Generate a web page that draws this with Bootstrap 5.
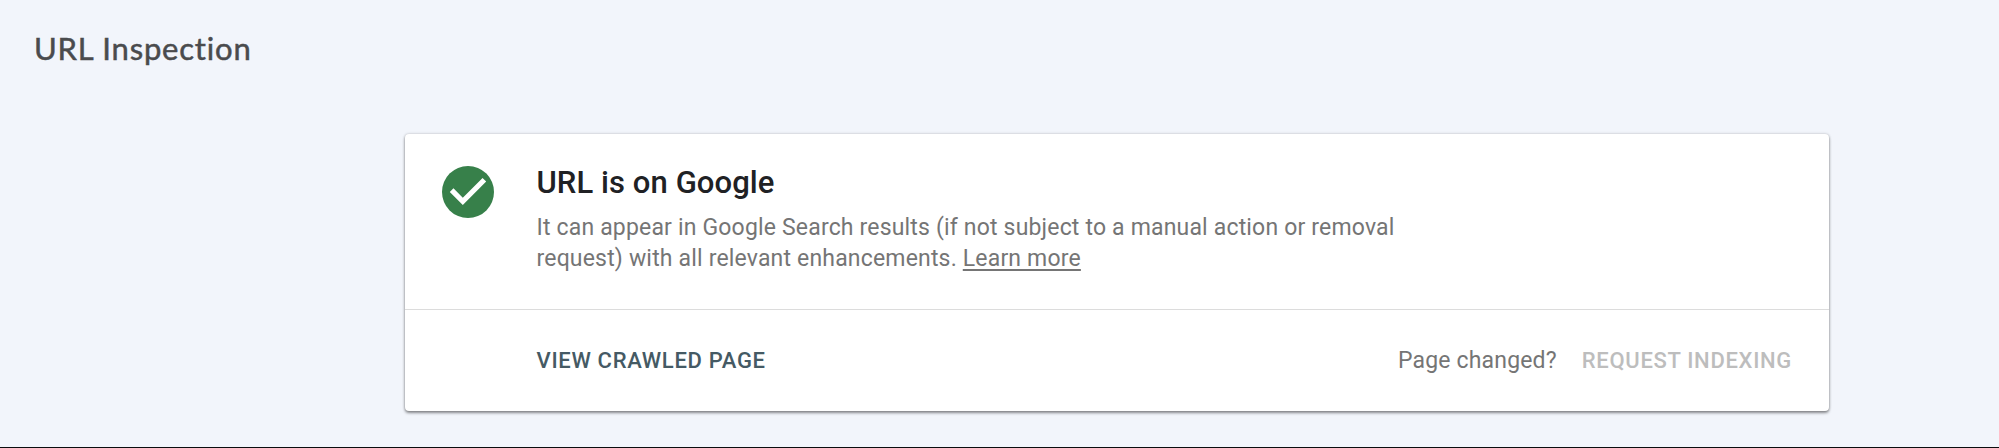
<!DOCTYPE html>
<html lang="en">
<head>
<meta charset="utf-8">
<meta name="viewport" content="width=device-width, initial-scale=1">
<title>URL Inspection</title>
<link href="https://cdn.jsdelivr.net/npm/bootstrap@5.3.0/dist/css/bootstrap.min.css" rel="stylesheet">
<style>
  body { background: #f2f5fb; font-family: Roboto, "Liberation Sans", sans-serif; }
  .page { height: 100vh; border-bottom: 1px solid #0b0c0e; padding: 27px 170px 0 34px; }
  .page-title { font: 400 31px/42px Lato, "Open Sans", sans-serif; color: #4a4b4d; letter-spacing: .8px; -webkit-text-stroke: .5px #4a4b4d; }
  .result { width: 1424px; margin-top: 65px; border: 0; border-radius: 4px; box-shadow: 0 2px 3px rgba(0,0,0,.42), 0 0 3px rgba(0,0,0,.22); }
  .verdict { height: 175px; padding: 28px 37px 0 36.5px; gap: 43px; }
  .verdict svg { margin-top: 4px; }
  .verdict-title { font-size: 31px; line-height: 42px; font-weight: 500; color: #202124; letter-spacing: .08px; }
  .verdict-text { font-size: 23px; line-height: 31px; color: #757575; margin-top: 8px; white-space: nowrap; letter-spacing: .175px; }
  .verdict-text a { color: inherit; text-underline-offset: 3px; text-decoration-thickness: 2px; }
  .actions { height: 102px; border-top: 1px solid #dcdcdc; padding: 0 37px 0 131.5px; gap: 25px; }
  .action { --bs-btn-padding-x: 0; --bs-btn-padding-y: 0; --bs-btn-border-width: 0; --bs-btn-font-size: 22px; --bs-btn-font-weight: 500; --bs-btn-color: #455a64; --bs-btn-disabled-color: #bdbdbd; --bs-btn-disabled-opacity: 1; letter-spacing: .68px; }
  .hint { font-size: 23px; color: #757575; letter-spacing: .175px; padding-top: 1px; }
</style>
</head>
<body>
<main class="page">
  <h1 class="page-title mb-0">URL Inspection</h1>
  <section class="card result ms-auto">
    <div class="verdict d-flex align-items-start">
      <svg width="52" height="52" viewBox="2 2 20 20" aria-hidden="true"><circle cx="12" cy="12" r="10" fill="#37804a"/><path fill="#fff" d="M10 17l-5-5 1.41-1.41L10 14.17l7.59-7.59L19 8z"/></svg>
      <div>
        <h2 class="verdict-title mb-0">URL is on Google</h2>
        <p class="verdict-text mb-0">It can appear in Google Search results (if not subject to a manual action or removal<br>request) with all relevant enhancements. <a href="#">Learn more</a></p>
      </div>
    </div>
    <div class="actions d-flex align-items-center">
      <button type="button" class="btn action me-auto">VIEW CRAWLED PAGE</button>
      <span class="hint">Page changed?</span>
      <button type="button" class="btn action" disabled>REQUEST INDEXING</button>
    </div>
  </section>
</main>
<script src="https://cdn.jsdelivr.net/npm/bootstrap@5.3.0/dist/js/bootstrap.bundle.min.js"></script>
</body>
</html>
